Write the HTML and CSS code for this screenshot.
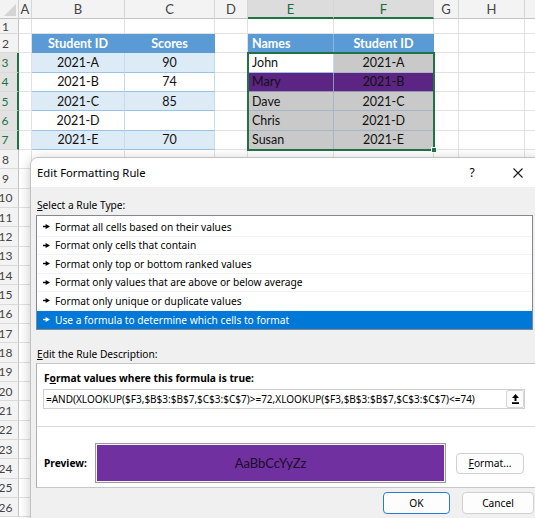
FILE: index.html
```html
<!DOCTYPE html>
<html lang="en">
<head>
    <meta charset="UTF-8">
    <meta name="viewport" content="width=device-width, initial-scale=1.0">
    <title>Edit Formatting Rule</title>
    <link rel="stylesheet" href="styles.css">
</head>
<body>
    <div class="sheet" id="sheet">
        <div class="corner">
            <svg width="12" height="12" viewBox="0 0 12 12"><polygon points="12,0 12,12 0,12" fill="#d4d4d4"/></svg>
        </div>
        <!-- selection around E3:F7 -->
        <div class="selection"><span class="fill-handle"></span></div>
    </div>

    <div class="dialog">
        <div class="title-bar">
            <span class="title">Edit Formatting Rule</span>
            <span class="help">?</span>
            <span class="close">
                <svg width="10" height="10" viewBox="0 0 10 10"><path d="M0.5 0.5L9.5 9.5M9.5 0.5L0.5 9.5" stroke="#1a1a1a" stroke-width="1.1"/></svg>
            </span>
        </div>

        <div class="dialog-body">
            <div class="label"><u>S</u>elect a Rule Type:</div>
            <ul class="rule-list" id="rule-list"></ul>

            <div class="label desc-label"><u>E</u>dit the Rule Description:</div>
            <div class="desc-box">
                <div class="formula-section">
                    <div class="formula-label">F<u>o</u>rmat values where this formula is true:</div>
                    <div class="formula-input">
                        <span class="formula-text">=AND(XLOOKUP($F3,$B$3:$B$7,$C$3:$C$7)&gt;=72,XLOOKUP($F3,$B$3:$B$7,$C$3:$C$7)&lt;=74)</span>
                        <span class="collapse-btn">
                            <svg width="7" height="10" viewBox="0 0 7 10"><path d="M3.5 0L7 4H4.5V7H2.5V4H0Z" fill="#000"/><rect x="0" y="8.2" width="7" height="1.8" fill="#000"/></svg>
                        </span>
                    </div>
                </div>
                <div class="preview-section">
                    <span class="preview-label">Preview:</span>
                    <div class="preview"><div class="swatch">AaBbCcYyZz</div></div>
                    <button class="btn format-btn"><u>F</u>ormat...</button>
                </div>
            </div>

            <div class="actions">
                <button class="btn ok-btn">OK</button>
                <button class="btn cancel-btn">Cancel</button>
            </div>
        </div>
    </div>

    <script>
        const sheet = document.getElementById('sheet');
        // last column is only a sliver at the right edge, its letter is off screen
        const columns = ['A', 'B', 'C', 'D', 'E', 'F', 'G', 'H', ''];
        const selectedCols = ['E', 'F'];

        const cells = {
            B2: ['Student ID', 'head'], C2: ['Scores', 'head'],
            B3: ['2021-A', 'band'], C3: ['90', 'band'],
            B4: ['2021-B', 'plain'], C4: ['74', 'plain'],
            B5: ['2021-C', 'band'], C5: ['85', 'band'],
            B6: ['2021-D', 'plain'], C6: ['', 'plain'],
            B7: ['2021-E', 'band'], C7: ['70', 'band'],

            E2: ['Names', 'head left split'], F2: ['Student ID', 'head'],
            E3: ['John', 'plain left'], F3: ['2021-A', 'gray'],
            E4: ['Mary', 'purple left'], F4: ['2021-B', 'purple'],
            E5: ['Dave', 'gray left'], F5: ['2021-C', 'gray'],
            E6: ['Chris', 'gray left'], F6: ['2021-D', 'gray'],
            E7: ['Susan', 'gray left'], F7: ['2021-E', 'gray']
        };

        columns.forEach(col => {
            const head = document.createElement('div');
            head.className = 'col-head' + (selectedCols.includes(col) ? ' selected' : '');
            head.textContent = col;
            sheet.appendChild(head);
        });

        for (let row = 1; row <= 26; row++) {
            const head = document.createElement('div');
            head.className = 'row-head' + (row >= 3 && row <= 7 ? ' selected' : '');
            head.textContent = row;
            sheet.appendChild(head);

            columns.forEach((col, i) => {
                const cell = document.createElement('div');
                const entry = cells[col + row];
                cell.className = 'cell' + (entry ? ' ' + entry[1] : '');
                if (entry) cell.textContent = entry[0];
                sheet.appendChild(cell);
            });
        }

        const rules = [
            'Format all cells based on their values',
            'Format only cells that contain',
            'Format only top or bottom ranked values',
            'Format only values that are above or below average',
            'Format only unique or duplicate values',
            'Use a formula to determine which cells to format'
        ];
        const ruleList = document.getElementById('rule-list');
        rules.forEach((rule, index) => {
            const item = document.createElement('li');
            if (index === rules.length - 1) item.className = 'active';
            item.innerHTML = `
                <svg class="bullet" width="7" height="5" viewBox="0 0 7 5"><path d="M0 2.5H3" stroke="currentColor" stroke-width="1.4"/><path d="M2.6 0L7 2.5L2.6 5Z" fill="currentColor"/></svg>
                <span>${rule}</span>
            `;
            ruleList.appendChild(item);
        });
    </script>
</body>
</html>
```

FILE: styles.css
```css
* {
    box-sizing: border-box;
}
body {
    margin: 0;
    width: 535px;
    height: 518px;
    overflow: hidden;
    position: relative;
    background-color: #fff;
    font-family: 'Lato', 'Liberation Sans', sans-serif;
}

/* ---------- worksheet ---------- */
.sheet {
    position: relative;
    display: grid;
    grid-template-columns: 19px 13px 93px 90px 33px 86px 100px 25px 66px 66px;
    grid-template-rows: 19px 15px;
    grid-auto-rows: 19.33px;
    font-size: 12.5px;
    color: #111;
}
.corner {
    background-color: #f3f3f3;
    border-right: 1px solid #d0d0d0;
    border-bottom: 1px solid #c4c4c4;
    display: flex;
    justify-content: flex-end;
    align-items: flex-end;
    padding: 0 2px 2px 0;
}
.col-head {
    background-color: #f3f3f3;
    border-right: 1px solid #d6d6d6;
    border-bottom: 1px solid #c4c4c4;
    color: #444;
    font-size: 13px;
    text-align: center;
    line-height: 18px;
}
.col-head.selected {
    background-color: #dcdcdc;
    color: #1e6b41;
    border-bottom: 2px solid #217346;
}
.row-head {
    background-color: #f3f3f3;
    border-right: 1px solid #c4c4c4;
    border-bottom: 1px solid #dadada;
    color: #444;
    font-size: 12px;
    display: flex;
    align-items: center;
    justify-content: center;
    padding-right: 7px;
}
.row-head.selected {
    background-color: #e2e2e2;
    color: #217346;
    border-right: 2px solid #217346;
}
.cell {
    border-right: 1px solid #e1e1e1;
    border-bottom: 1px solid #e1e1e1;
    display: flex;
    align-items: center;
    justify-content: center;
    white-space: nowrap;
    overflow: hidden;
}
.cell.left {
    justify-content: flex-start;
    padding-left: 4px;
}
.cell.head {
    background-color: #5b9bd5;
    border-color: #5b9bd5;
    color: #fff;
    font-weight: bold;
}
.cell.head.split {
    border-right-color: #86b6e2;
}
.cell.band {
    background-color: #ddebf7;
    border-bottom-color: #9bc2e6;
    border-right-color: #c7dbef;
}
.cell.plain {
    background-color: #fff;
    border-bottom-color: #9bc2e6;
    border-right-color: #c7dbef;
}
.cell.gray {
    background-color: #c9c9c9;
    border-bottom-color: #a4b6c8;
    border-right-color: #a4b6c8;
}
.cell.purple {
    background-color: #5c2483;
    border-bottom-color: #8f96b8;
    border-right-color: #8f96b8;
}
.selection {
    position: absolute;
    grid-column: 6 / 8;
    grid-row: 4 / 9;
    top: -1px;
    left: -1px;
    right: -1px;
    bottom: -1px;
    border: 2px solid #217346;
    z-index: 2;
}
.fill-handle {
    position: absolute;
    right: -4px;
    bottom: -4px;
    width: 6px;
    height: 6px;
    background-color: #217346;
    border: 1px solid #fff;
}

/* ---------- dialog ---------- */
.dialog {
    position: absolute;
    left: 30px;
    top: 157px;
    width: 512px;
    height: 380px;
    background-color: #f0f0f0;
    border: 1px solid #c2c2c2;
    border-radius: 8px 0 0 0;
    box-shadow: 0 2px 12px rgba(0, 0, 0, 0.22);
    font-family: 'Noto Sans', 'Open Sans', sans-serif;
    font-size: 10.2px;
    color: #000;
    overflow: hidden;
    z-index: 5;
}
.title-bar {
    height: 29px;
    background-color: #fff;
    display: flex;
    align-items: center;
    padding-left: 6px;
}
.title {
    flex: 1;
    font-size: 11.3px;
}
.help {
    width: 46px;
    text-align: center;
    font-size: 12px;
}
.close {
    width: 46px;
    display: flex;
    justify-content: center;
}
.dialog-body {
    padding: 0 8px 0 5px;
}
.label {
    margin-top: 11px;
    padding-left: 1px;
    line-height: 14px;
}
.desc-label {
    margin-top: 17px;
}
.rule-list {
    list-style: none;
    margin: 3px 0 0;
    padding: 2px 0 0;
    background-color: #fff;
    border: 1px solid #828790;
}
.rule-list li {
    height: 18.5px;
    display: flex;
    align-items: center;
    padding-left: 6px;
    border-bottom: 1px solid #f2f2f2;
}
.rule-list li:last-child {
    border-bottom: none;
}
.rule-list li.active {
    background-color: #0078d7;
    color: #fff;
}
.bullet {
    margin-right: 5px;
}
.desc-box {
    margin-top: 2px;
    margin-right: -12px;
    background-color: #fff;
    border: 1px solid #c6c6c6;
    border-left-color: #b0b0b0;
}
.formula-section {
    padding: 7px 0 17px 6px;
}
.formula-label {
    padding-left: 1px;
    line-height: 14px;
    font-weight: bold;
}
.formula-input {
    margin-top: 4px;
    width: 482px;
    height: 20px;
    border: 1px solid #cfcfcf;
    display: flex;
    align-items: center;
    padding-left: 2px;
}
.formula-text {
    flex: 1;
    font-size: 10px;
    white-space: nowrap;
}
.collapse-btn {
    width: 18px;
    height: 18px;
    border: 1px solid #d6d6d6;
    border-radius: 2px;
    background-color: #fbfbfb;
    display: flex;
    align-items: center;
    justify-content: center;
}
.preview-section {
    border-top: 1px solid #dadada;
    display: flex;
    align-items: center;
    padding: 16px 0 4px 7px;
}
.preview-label {
    width: 51px;
    font-weight: bold;
}
.preview {
    width: 351px;
    height: 40px;
    border: 1px solid #9a9a9a;
    padding: 1px;
    background-color: #f4f4f4;
}
.swatch {
    height: 100%;
    background-color: #7030a0;
    display: flex;
    align-items: center;
    justify-content: center;
    font-family: 'Lato', sans-serif;
    font-size: 13px;
    color: #1c0a2a;
}
.btn {
    font-family: inherit;
    font-size: 10.2px;
    color: #000;
    background-color: #fdfdfd;
    border: 1px solid #d0d0d0;
    border-radius: 4px;
    padding: 0;
    cursor: pointer;
}
.format-btn {
    margin-left: 10px;
    width: 68px;
    height: 21px;
}
.actions {
    margin-top: 4px;
    display: flex;
    justify-content: flex-end;
    gap: 12px;
    margin-right: -1px;
}
.ok-btn {
    width: 67px;
    height: 22px;
    border-color: #2a7ad2;
}
.cancel-btn {
    width: 72px;
    height: 22px;
}
```
